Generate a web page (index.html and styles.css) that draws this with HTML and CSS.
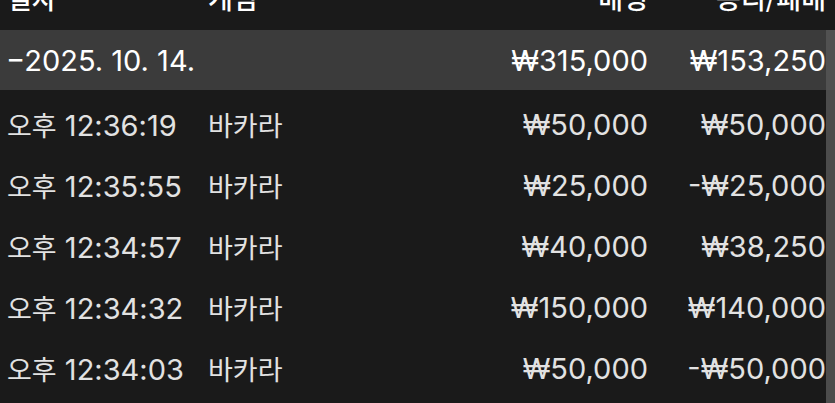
FILE: index.html
```html
<!DOCTYPE html>
<html lang="ko">
<head>
<meta charset="utf-8">
<link rel="stylesheet" href="styles.css">
</head>
<body>
<div class="page">
  <div class="table">
    <div class="head">
      <span class="c1 ko">일자</span>
      <span class="c2 ko">게임</span>
      <span class="c3 ko">배팅</span>
      <span class="c4 ko">승리/패배</span>
    </div>
    <div class="body">
      <div class="group">
        <span class="c12">−2025. 10. 14.</span>
        <span class="c3">₩315,000</span>
        <span class="c4">₩153,250</span>
      </div>
      <div class="rows">
        <div class="row"><span class="c1"><span class="ko">오후</span> 12:36:19</span><span class="c2 ko">바카라</span><span class="c3">₩50,000</span><span class="c4">₩50,000</span></div>
        <div class="row"><span class="c1"><span class="ko">오후</span> 12:35:55</span><span class="c2 ko">바카라</span><span class="c3">₩25,000</span><span class="c4">-₩25,000</span></div>
        <div class="row"><span class="c1"><span class="ko">오후</span> 12:34:57</span><span class="c2 ko">바카라</span><span class="c3">₩40,000</span><span class="c4">₩38,250</span></div>
        <div class="row"><span class="c1"><span class="ko">오후</span> 12:34:32</span><span class="c2 ko">바카라</span><span class="c3">₩150,000</span><span class="c4">₩140,000</span></div>
        <div class="row"><span class="c1"><span class="ko">오후</span> 12:34:03</span><span class="c2 ko">바카라</span><span class="c3">₩50,000</span><span class="c4">-₩50,000</span></div>
      </div>
      <div class="scrollbar"></div>
    </div>
  </div>
</div>
</body>
</html>
```
FILE: styles.css
```css
html, body {
  margin: 0;
  padding: 0;
  background: #1a1a1a;
}
body {
  width: 835px;
  height: 403px;
  overflow: hidden;
  font-family: "Inter", "Noto Sans CJK KR", sans-serif;
  font-size: 29px;
  color: #e2e2e2;
}
.page {
  width: 835px;
  height: 403px;
  overflow: hidden;
}
.ko {
  font-family: "Noto Sans CJK KR", sans-serif;
  font-size: 27px;
}
.head {
  height: 30px;
  overflow: hidden;
  display: grid;
  grid-template-columns: 208px 253px 187px 178px 9px;
  align-items: start;
  color: #ffffff;
}
.head span {
  line-height: 34px;
  margin-top: -19px;
  font-weight: 500;
}
.c1 { padding-left: 7px; }
.c3, .c4 { text-align: right; }
.body {
  position: relative;
}
.group {
  height: 60px;
  background: #3b3b3b;
  color: #ffffff;
  display: grid;
  grid-template-columns: 461px 187px 178px 9px;
  align-items: center;
}
.c12 { padding-left: 6px; }
.rows {
  padding-top: 4px;
}
.row {
  height: 61px;
  display: grid;
  grid-template-columns: 208px 253px 187px 178px 9px;
  align-items: center;
}
.scrollbar {
  position: absolute;
  right: 0;
  top: 0;
  width: 9px;
  height: 400px;
  background: #565656;
  opacity: 0.85;
}
```
